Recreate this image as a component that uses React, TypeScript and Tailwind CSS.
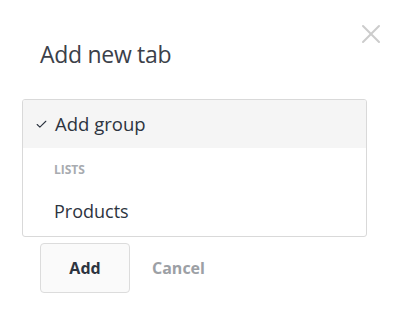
import { X, Check } from "lucide-react";

export default function App() {
  return (
    <div
      className="relative w-[406px] h-[333px] bg-white"
      style={{ fontFamily: '"Open Sans", "Noto Sans", sans-serif' }}
    >
      {/* Close */}
      <button className="absolute left-[355px] top-[18px] text-[#cccccc]">
        <X className="h-[32px] w-[32px]" strokeWidth={1.5} />
      </button>

      <div className="pt-[36px] px-[22px]">
        {/* Header */}
        <h1 className="ml-[18px] text-[23px] leading-[36px] text-[#3b4049] tracking-[-0.3px]">
          Add new tab
        </h1>

        {/* Dropdown */}
        <div className="mt-[27px] w-[345px] rounded-[3px] border border-[#d9d9d9] bg-white overflow-hidden">
          <div className="flex items-center h-[48px] bg-[#f5f5f5] pl-[12px]">
            <Check className="h-[13px] w-[13px] text-[#2d3440]" strokeWidth={2} />
            <span className="ml-[7px] text-[18.5px] text-[#2d3440]">Add group</span>
          </div>
          <div className="pl-[31px] pt-[13px] pb-[5px] text-[12px] font-bold uppercase text-[#a8abb0] leading-[18px]">
            Lists
          </div>
          <div className="flex items-center h-[52px] pl-[31px] pt-[3px] text-[18px] text-[#2d3440]">
            Products
          </div>
        </div>

        {/* Actions */}
        <div className="ml-[18px] mt-[6px] flex items-center">
          <button className="h-[50px] w-[90px] rounded-[4px] border border-[#dcdcdc] bg-[#fafafa] text-[16px] font-bold text-[#2d3440]">
            Add
          </button>
          <button className="ml-[22px] text-[16px] font-bold text-[#9ca0a5]">
            Cancel
          </button>
        </div>
      </div>
    </div>
  );
}
